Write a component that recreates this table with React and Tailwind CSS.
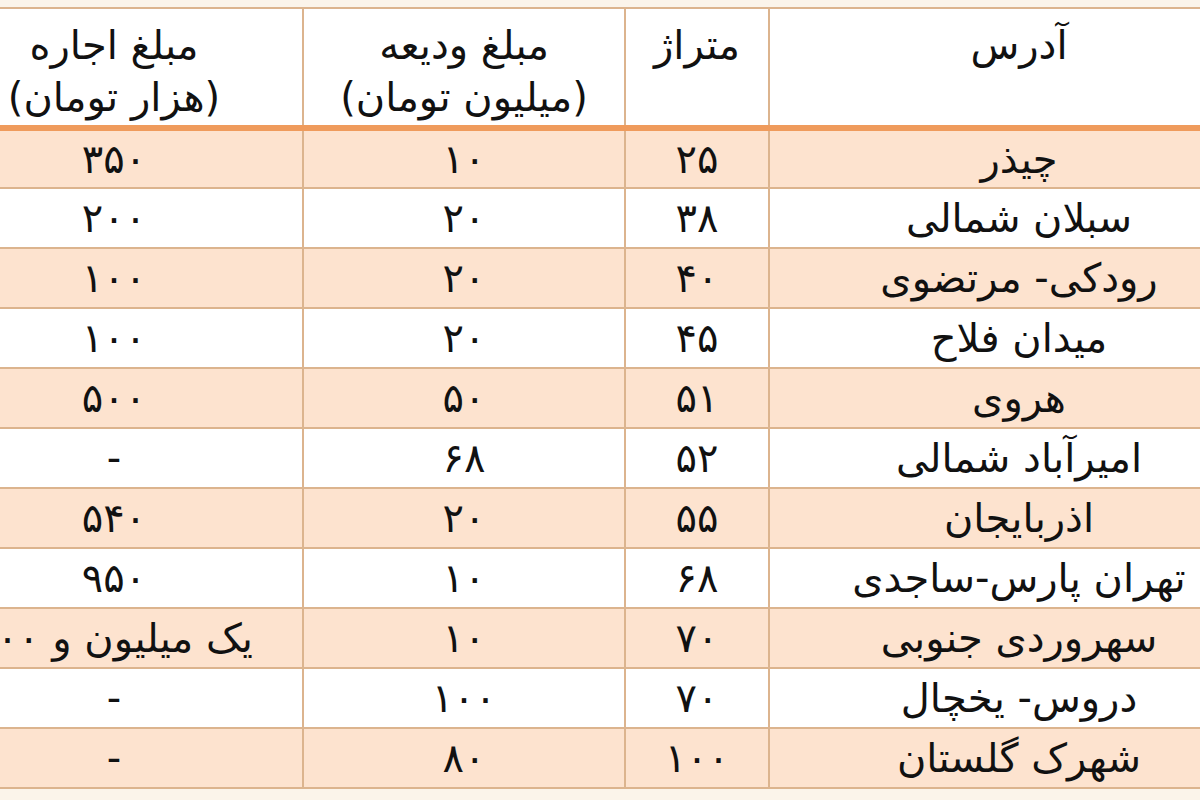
const rows = [
  ['چیذر', '۲۵', '۱۰', '۳۵۰'],
  ['سبلان شمالی', '۳۸', '۲۰', '۲۰۰'],
  ['رودکی- مرتضوی', '۴۰', '۲۰', '۱۰۰'],
  ['میدان فلاح', '۴۵', '۲۰', '۱۰۰'],
  ['هروی', '۵۱', '۵۰', '۵۰۰'],
  ['امیرآباد شمالی', '۵۲', '۶۸', '-'],
  ['اذربایجان', '۵۵', '۲۰', '۵۴۰'],
  ['تهران پارس-ساجدی', '۶۸', '۱۰', '۹۵۰'],
  ['سهروردی جنوبی', '۷۰', '۱۰', 'یک میلیون و ۲۰۰'],
  ['دروس- یخچال', '۷۰', '۱۰۰', '-'],
  ['شهرک گلستان', '۱۰۰', '۸۰', '-'],
];

function App() {
  return (
    <div
      dir="rtl"
      className="h-[800px] w-[1200px] overflow-hidden bg-[#fbf4ea] pt-[7px] text-[#111]"
      style={{ fontFamily: '"DejaVu Sans", sans-serif' }}
    >
      <table className="-mr-[70px] w-[1344px] table-fixed border-collapse text-center text-[40px] leading-[52px]">
        <colgroup>
          <col className="w-[500px]" />
          <col className="w-[144px]" />
          <col className="w-[322px]" />
          <col className="w-[378px]" />
        </colgroup>
        <thead>
          <tr className="bg-white">
            <th className="h-[120px] border-2 border-b-[6px] border-[#dcb48e] border-b-[#ef9b5c] pt-[10px] align-top font-normal">
              آدرس
            </th>
            <th className="border-2 border-b-[6px] border-[#dcb48e] border-b-[#ef9b5c] pt-[10px] align-top font-normal">
              متراژ
            </th>
            <th className="border-2 border-b-[6px] border-[#dcb48e] border-b-[#ef9b5c] pt-[10px] align-top font-normal">
              مبلغ ودیعه
              <br />
              (میلیون تومان)
            </th>
            <th className="border-2 border-b-[6px] border-[#dcb48e] border-b-[#ef9b5c] pt-[10px] align-top font-normal">
              مبلغ اجاره
              <br />
              (هزار تومان)
            </th>
          </tr>
        </thead>
        <tbody>
          {rows.map((row, i) => (
            <tr key={i} className={i % 2 === 0 ? 'bg-[#fde3cf]' : 'bg-white'}>
              {row.map((cell, j) => (
                <td
                  key={j}
                  className="h-[60px] whitespace-nowrap border-2 border-[#dcb48e] p-0 align-middle"
                >
                  {cell}
                </td>
              ))}
            </tr>
          ))}
        </tbody>
      </table>
    </div>
  );
}

export default App;
